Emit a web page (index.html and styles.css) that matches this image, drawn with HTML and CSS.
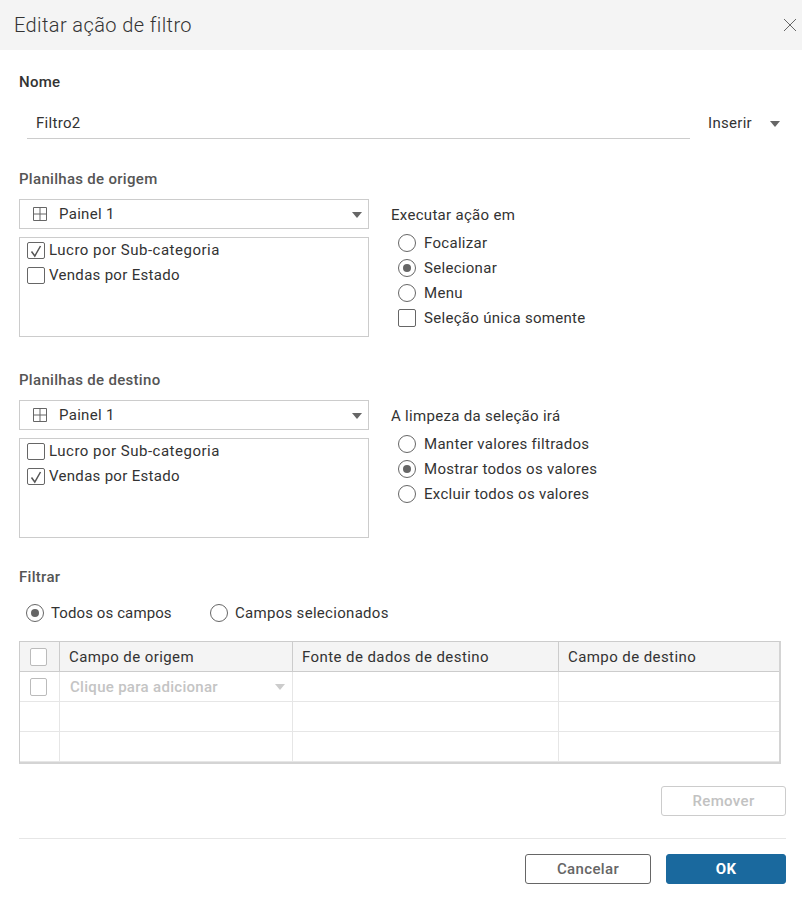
FILE: index.html
```html
<!DOCTYPE html>
<html lang="pt">
<head>
<meta charset="utf-8">
<title>Editar ação de filtro</title>
<link rel="stylesheet" href="styles.css">
</head>
<body>
<div class="dialog">
  <header class="head">
    <h1 class="title">Editar ação de filtro</h1>
    <svg class="close" width="14" height="14" viewBox="0 0 14 14"><path d="M1 1L13 13M13 1L1 13" stroke="#666" stroke-width="1" fill="none"/></svg>
  </header>
  <main class="body">
    <div class="label name-label">Nome</div>
    <div class="name-row">
      <div class="name-input">Filtro2</div>
      <div class="insert">Inserir<span class="caret caret-insert"></span></div>
    </div>

    <section class="sheets first">
      <div class="label">Planilhas de origem</div>
      <div class="sheets-row">
        <div class="col-left">
          <div class="select">
            <svg class="grid-icon" width="14" height="14" viewBox="0 0 14 14"><path d="M.5.5h13v13H.5zM7 .5v13M.5 7h13" stroke="#666" fill="none"/></svg>
            <span>Painel 1</span><span class="caret caret-select"></span>
          </div>
          <div class="list">
            <div class="list-row wide"><span class="box checked"><svg width="14" height="14" viewBox="0 0 14 14"><path d="M2.5 7.5L5.8 12L11.5 2" stroke="#555" stroke-width="1.5" fill="none"/></svg></span>Lucro por Sub-categoria</div>
            <div class="list-row"><span class="box"></span>Vendas por Estado</div>
          </div>
        </div>
        <div class="col-right">
          <div class="opt-title">Executar ação em</div>
          <div class="opt"><span class="radio"></span>Focalizar</div>
          <div class="opt"><span class="radio on"></span>Selecionar</div>
          <div class="opt"><span class="radio"></span>Menu</div>
          <div class="opt"><span class="box"></span>Seleção única somente</div>
        </div>
      </div>
    </section>

    <section class="sheets second">
      <div class="label">Planilhas de destino</div>
      <div class="sheets-row">
        <div class="col-left">
          <div class="select">
            <svg class="grid-icon" width="14" height="14" viewBox="0 0 14 14"><path d="M.5.5h13v13H.5zM7 .5v13M.5 7h13" stroke="#666" fill="none"/></svg>
            <span>Painel 1</span><span class="caret caret-select"></span>
          </div>
          <div class="list">
            <div class="list-row wide"><span class="box"></span>Lucro por Sub-categoria</div>
            <div class="list-row"><span class="box checked"><svg width="14" height="14" viewBox="0 0 14 14"><path d="M2.5 7.5L5.8 12L11.5 2" stroke="#555" stroke-width="1.5" fill="none"/></svg></span>Vendas por Estado</div>
          </div>
        </div>
        <div class="col-right">
          <div class="opt-title">A limpeza da seleção irá</div>
          <div class="opt"><span class="radio"></span>Manter valores filtrados</div>
          <div class="opt"><span class="radio on"></span>Mostrar todos os valores</div>
          <div class="opt"><span class="radio"></span>Excluir todos os valores</div>
        </div>
      </div>
    </section>

    <section class="filter">
      <div class="label">Filtrar</div>
      <div class="filter-opts">
        <div class="filter-opt all"><span class="radio on"></span>Todos os campos</div>
        <div class="filter-opt"><span class="radio"></span>Campos selecionados</div>
      </div>
      <div class="table">
        <div class="cell hd c-box"><span class="box"></span></div>
        <div class="cell hd">Campo de origem</div>
        <div class="cell hd">Fonte de dados de destino</div>
        <div class="cell hd last">Campo de destino</div>

        <div class="cell c-box"><span class="box"></span></div>
        <div class="cell placeholder">Clique para adicionar<span class="caret caret-ph"></span></div>
        <div class="cell"></div>
        <div class="cell last"></div>

        <div class="cell c-box"></div><div class="cell"></div><div class="cell"></div><div class="cell last"></div>
        <div class="cell c-box"></div><div class="cell"></div><div class="cell"></div><div class="cell last"></div>
      </div>
    </section>

    <div class="remove-row"><button class="btn remove">Remover</button></div>
    <footer class="foot">
      <button class="btn cancel">Cancelar</button>
      <button class="btn ok">OK</button>
    </footer>
  </main>
</div>
</body>
</html>
```

FILE: styles.css
```css
* { box-sizing: border-box; }
html, body { margin: 0; padding: 0; background: #fff; }
body { font-family: "Roboto", "Liberation Sans", sans-serif; font-size: 15px; color: #333; line-height: 20px; letter-spacing: .3px; }
.dialog { width: 802px; height: 905px; overflow: hidden; }
.head { height: 50px; background: #f4f4f4; display: flex; align-items: center; justify-content: space-between; padding: 0 5px 0 14px; }
.title { margin: 0; font-size: 20px; font-weight: 300; color: #333; line-height: 50px; letter-spacing: .4px; }
.close { display: block; }
.body { padding: 0 16px 0 19px; }
.label { font-weight: 500; color: #555; line-height: 20px; }
.name-label { margin-top: 22px; color: #333; }
.name-row { display: flex; align-items: flex-start; margin-top: 21px; height: 26px; }
.name-input { margin-left: 8px; width: 663px; height: 26px; padding: 0 9px; border-bottom: 1px solid #ccc; line-height: 20px; }
.insert { margin-left: 18px; width: 77px; display: flex; align-items: center; height: 20px; }
.caret { width: 0; height: 0; border-left: 5px solid transparent; border-right: 5px solid transparent; border-top: 6px solid #666; display: block; }
.caret-insert { margin-left: auto; margin-right: 5px; margin-top: 2px; }
.sheets.first { margin-top: 30px; }
.sheets.second { margin-top: 33px; }
.sheets-row { display: flex; margin-top: 10px; }
.col-left { width: 350px; }
.col-right { margin-left: 22px; padding-top: 6px; }
.select { height: 30px; border: 1px solid #ccc; display: flex; align-items: center; padding: 0 6px 0 13px; }
.grid-icon { margin-right: 12px; }
.caret-select { margin-left: auto; margin-top: 2px; }
.list { height: 100px; margin-top: 8px; border: 1px solid #ccc; }
.list-row { height: 25px; display: flex; align-items: center; padding: 0 0 1px 7px; }
.list-row .box { height: 17px; margin-top: 1px; }
.list-row.wide { letter-spacing: .5px; }
.box { width: 18px; height: 18px; border: 1px solid #666; border-radius: 2px; background: #fff; flex: none; display: flex; align-items: center; justify-content: center; margin-right: 4px; }
.box svg { display: block; }
.radio { width: 18px; height: 18px; border: 1px solid #666; border-radius: 50%; background: #fff; flex: none; display: flex; align-items: center; justify-content: center; }
.radio.on::after { content: ""; width: 8px; height: 8px; border-radius: 50%; background: #666; }
.opt-title { height: 20px; margin-bottom: 5px; }
.opt { height: 25px; display: flex; align-items: center; padding-left: 7px; }
.opt .radio, .opt .box { margin-right: 8px; }
.filter { margin-top: 29px; }
.filter-opts { display: flex; margin-top: 16px; height: 20px; padding-left: 7px; }
.filter-opt { display: flex; align-items: center; }
.filter-opt .radio { margin-right: 7px; }
.filter-opt.all { width: 184px; letter-spacing: .1px; }
.table { margin-top: 18px; width: 762px; display: grid; grid-template-columns: 40px 233px 266px 220px; grid-auto-rows: 30px; border-left: 1px solid #ccc; border-top: 1px solid #ccc; border-right: 2px solid #d4d4d4; border-bottom: 2px solid #d4d4d4; height: 123px; }
.cell { border-right: 1px solid #e6e6e6; border-bottom: 1px solid #e6e6e6; padding: 0 9px; display: flex; align-items: center; }
.cell.last { border-right: 0; }
.cell.hd { background: #f4f4f4; border-right-color: #ccc; border-bottom-color: #ccc; letter-spacing: .42px; }
.c-box { padding: 0 0 0 10px; }
.c-box .box { width: 17px; height: 18px; border-color: #bbb; margin: 0; }
.placeholder { color: #c4c4c4; font-weight: 500; padding-left: 10px; justify-content: space-between; padding-right: 7px; }
.caret-ph { border-top-color: #ccc; }
.btn { font: 500 15px/20px "Roboto", "Liberation Sans", sans-serif; letter-spacing: .35px; height: 30px; border-radius: 3px; padding: 0; background: #fff; }
.remove-row { display: flex; justify-content: flex-end; margin-top: 22px; }
.remove { width: 125px; border: 1px solid #ccc; color: #c2c2c2; }
.foot { margin-top: 22px; border-top: 1px solid #e6e6e6; padding-top: 15px; display: flex; justify-content: flex-end; gap: 15px; }
.cancel { width: 126px; border: 1px solid #666; color: #666; }
.ok { width: 120px; border: 1px solid #1a699e; background: #1a699e; color: #fff; font-weight: 700; }
```
